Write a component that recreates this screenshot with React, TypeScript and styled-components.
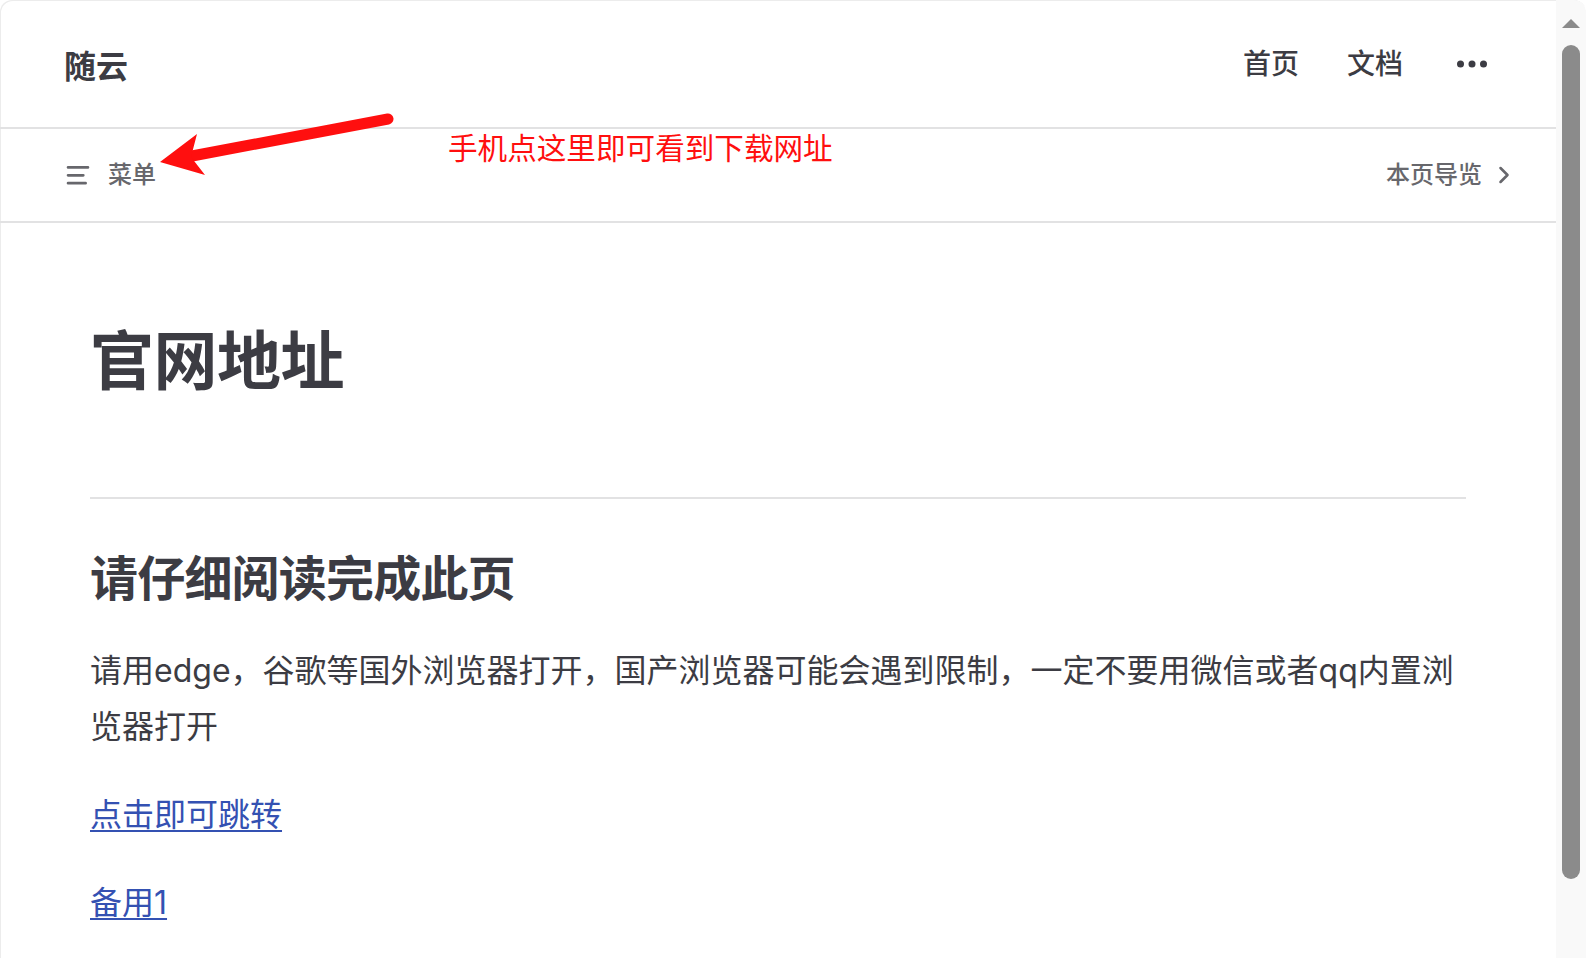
import React from "react";
import styled, { createGlobalStyle } from "styled-components";

const TEXT_1 = "#3c3c43";
const TEXT_2 = "#67676c";
const DIVIDER = "#e2e2e3";
const BRAND = "#3451b2";
const NOTE_RED = "#ff0f0f";

const GlobalStyle = createGlobalStyle`
  html, body {
    margin: 0;
    padding: 0;
    background: #ffffff;
    overflow: hidden;
  }
  body {
    font-family: Inter, "Noto Sans CJK SC", sans-serif;
    color: ${TEXT_1};
  }
  * {
    box-sizing: border-box;
  }
`;

const Frame = styled.div`
  display: flex;
  width: 1586px;
  height: 958px;
  border-radius: 12px 12px 0 0;
  box-shadow: inset 1px 1px 0 #ececec;
  overflow: hidden;
`;

const Page = styled.div`
  position: relative;
  flex: 1;
  min-width: 0;
  display: flex;
  flex-direction: column;
`;

const NavBar = styled.header`
  display: flex;
  flex-shrink: 0;
  align-items: center;
  height: 129px;
  padding: 0 69px 0 64px;
  border-bottom: 2px solid ${DIVIDER};
`;

const SiteTitle = styled.a`
  font-size: 32px;
  font-weight: 700;
  color: ${TEXT_1};
  text-decoration: none;
`;

const NavLinks = styled.nav`
  display: flex;
  align-items: center;
  margin-left: auto;
`;

const NavLink = styled.a`
  padding: 0 24px;
  font-size: 28px;
  font-weight: 500;
  line-height: 64px;
  color: ${TEXT_1};
  text-decoration: none;
`;

const MoreButton = styled.button`
  display: flex;
  align-items: center;
  margin-left: 30px;
  padding: 0;
  border: 0;
  background: none;
  color: ${TEXT_1};
`;

const LocalNav = styled.div`
  display: flex;
  flex-shrink: 0;
  align-items: center;
  justify-content: space-between;
  height: 94px;
  padding: 0 38px 0 64px;
  border-bottom: 2px solid ${DIVIDER};
`;

const LocalButton = styled.button<{ $iconFirst?: boolean }>`
  display: flex;
  align-items: center;
  gap: ${(p) => (p.$iconFirst ? "16px" : "8px")};
  padding: 0;
  border: 0;
  background: none;
  font-family: Inter, "Noto Sans CJK SC", sans-serif;
  font-size: 24px;
  font-weight: 500;
  line-height: 48px;
  color: ${TEXT_2};
`;

const Doc = styled.main`
  flex-shrink: 0;
  padding: 98px 90px 0;
`;

const Title = styled.h1`
  margin: 0;
  font-size: 64px;
  line-height: 80px;
  font-weight: 700;
  letter-spacing: -0.5px;
  color: ${TEXT_1};
`;

const SectionTitle = styled.h2`
  margin: 96px 0 0;
  padding-top: 48px;
  border-top: 2px solid ${DIVIDER};
  font-size: 48px;
  line-height: 64px;
  font-weight: 700;
  letter-spacing: -0.8px;
  color: ${TEXT_1};
`;

const Paragraph = styled.p`
  margin: 32px 0;
  font-size: 32px;
  line-height: 56px;
  color: ${TEXT_1};
`;

const DocLink = styled.a`
  color: ${BRAND};
  text-decoration: underline;
  text-decoration-thickness: 2px;
  text-underline-offset: 4px;
`;

/* red hand-drawn note sitting on top of the page */
const Annotation = styled.div`
  position: absolute;
  left: 150px;
  top: 105px;
  width: 700px;
  height: 80px;
  pointer-events: none;
`;

const NoteText = styled.span`
  position: absolute;
  left: 298px;
  top: 24px;
  font-family: "Noto Sans CJK SC", sans-serif;
  font-size: 29.6px;
  line-height: 36px;
  color: ${NOTE_RED};
  white-space: nowrap;
`;

const ScrollTrack = styled.div`
  width: 30px;
  flex-shrink: 0;
  display: flex;
  flex-direction: column;
  align-items: center;
  padding-top: 19px;
  background: #f9f9f9;
  border-top-right-radius: 12px;
`;

const ScrollArrow = styled.div`
  width: 0;
  height: 0;
  border-left: 9px solid transparent;
  border-right: 9px solid transparent;
  border-bottom: 9px solid #8b8b8b;
`;

const ScrollThumb = styled.div`
  width: 18px;
  height: 834px;
  margin-top: 17px;
  border-radius: 9px;
  background: #8b8b8b;
`;

const MenuIcon = () => (
  <svg width="28" height="28" viewBox="0 0 24 24" fill="none" stroke="currentColor" strokeWidth="2.4" strokeLinecap="round">
    <path d="M3.5 5.5h17M3.5 12.3h13M3.5 19h15" />
  </svg>
);

const ChevronIcon = () => (
  <svg width="28" height="28" viewBox="0 0 24 24" fill="none" stroke="currentColor" strokeWidth="2.2" strokeLinecap="round" strokeLinejoin="round">
    <path d="M9 6l6 6-6 6" />
  </svg>
);

const DotsIcon = () => (
  <svg width="30" height="8" viewBox="0 0 30 8" fill="currentColor">
    <circle cx="3.5" cy="4" r="3.5" />
    <circle cx="15" cy="4" r="3.5" />
    <circle cx="26.5" cy="4" r="3.5" />
  </svg>
);

const Arrow = () => (
  <svg width="260" height="80" viewBox="150 105 260 80" style={{ position: "absolute", left: 0, top: 0 }}>
    <line x1="388" y1="119" x2="192" y2="156" stroke={NOTE_RED} strokeWidth="11" strokeLinecap="round" />
    <polygon points="160,162 197,134 191,157 205,175" fill={NOTE_RED} />
  </svg>
);

const App = () => {
  return (
    <>
      <GlobalStyle />
      <Frame>
        <Page>
          <NavBar>
            <SiteTitle href="#">随云</SiteTitle>
            <NavLinks>
              <NavLink href="#">首页</NavLink>
              <NavLink href="#">文档</NavLink>
            </NavLinks>
            <MoreButton aria-label="更多">
              <DotsIcon />
            </MoreButton>
          </NavBar>

          <LocalNav>
            <LocalButton $iconFirst>
              <MenuIcon />
              <span>菜单</span>
            </LocalButton>
            <LocalButton>
              <span>本页导览</span>
              <ChevronIcon />
            </LocalButton>
          </LocalNav>

          <Doc>
            <Title>官网地址</Title>
            <SectionTitle>请仔细阅读完成此页</SectionTitle>
            <Paragraph>
              请用edge，谷歌等国外浏览器打开，国产浏览器可能会遇到限制，一定不要用微信或者qq内置浏览器打开
            </Paragraph>
            <Paragraph>
              <DocLink href="#">点击即可跳转</DocLink>
            </Paragraph>
            <Paragraph>
              <DocLink href="#">备用1</DocLink>
            </Paragraph>
          </Doc>

          <Annotation>
            <Arrow />
            <NoteText>手机点这里即可看到下载网址</NoteText>
          </Annotation>
        </Page>

        <ScrollTrack>
          <ScrollArrow />
          <ScrollThumb />
        </ScrollTrack>
      </Frame>
    </>
  );
};

export default App;
